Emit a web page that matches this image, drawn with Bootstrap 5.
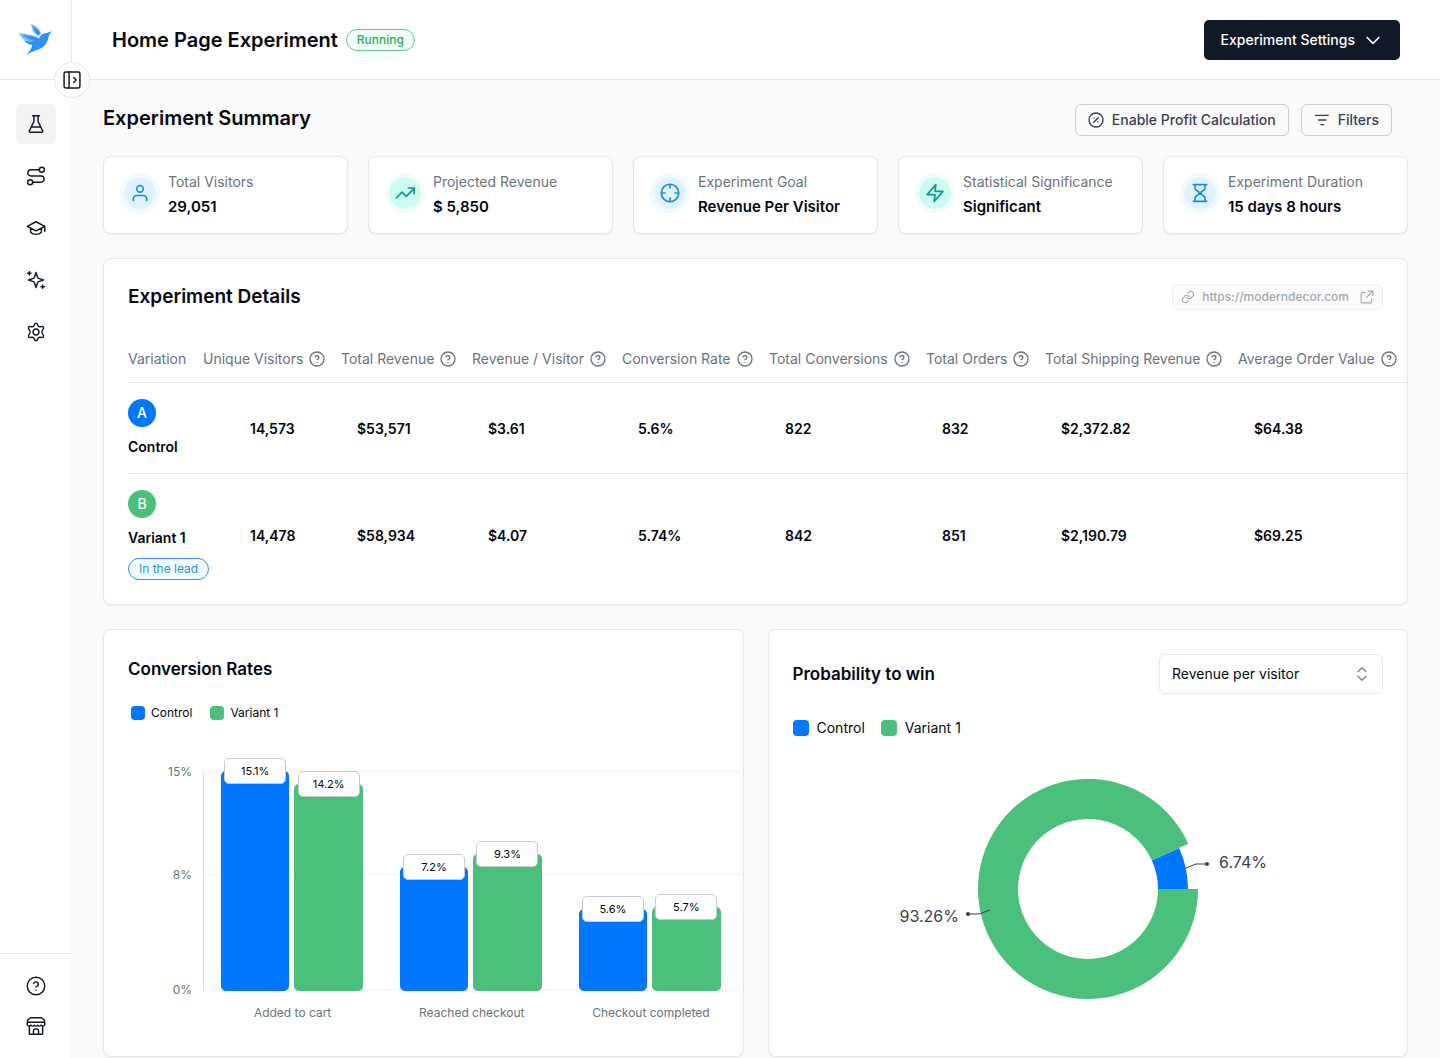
<!DOCTYPE html>
<html lang="en">
<head>
<meta charset="utf-8">
<meta name="viewport" content="width=device-width, initial-scale=1">
<title>Home Page Experiment</title>
<link href="https://cdn.jsdelivr.net/npm/bootstrap@5.3.0/dist/css/bootstrap.min.css" rel="stylesheet">
<style>
  :root {
    --ink: #030712; --ink-soft: #374151; --muted: #6b7280; --line: #e5e7eb;
    --control: #0077ff; --variant: #4bc07d; --rail: 71px;
  }
  body { font-family: Inter, "Liberation Sans", sans-serif; font-size: 14px; line-height: 20px; color: var(--ink); background: #fafafa; }
  svg { display: block; flex: none; }
  .icon { fill: none; stroke: currentColor; stroke-width: 2; stroke-linecap: round; stroke-linejoin: round; }
  .thin { stroke-width: 1.75; }

  .rail { width: var(--rail); height: 100vh; top: 0; z-index: 3; }
  .rail-brand { height: 80px; border-bottom: 1px solid var(--line); }
  .rail-nav { gap: 12px; }
  .rail-link { width: 40px; height: 40px; border-radius: 6px; color: #111827; }
  .rail-link.active { background: #f3f3f4; }
  .rail-foot { border-top: 1px solid var(--line); padding: 12px 0; }
  .rail-toggle { width: 36px; height: 36px; left: 54px; top: 62px; border: 1px solid var(--line); color: #111827; z-index: 4; }

  .content { min-width: 0; }
  .topbar { height: 80px; border-bottom: 1px solid var(--line); border-left: 1px solid var(--line); padding: 0 40px; }
  .topbar h1, .summary-title { font-size: 20px; line-height: 28px; font-weight: 600; }
  .pill { height: 22px; padding: 0 10px; border: 1px solid; font-size: 12px; line-height: 20px; font-weight: 500; }
  .pill-running { color: #2fae60; border-color: #5cc98a; background: #f0fdfa; }
  .pill-lead { color: #2f8fe6; border-color: #2f95f0; background: #f0fcff; font-weight: 400; }
  .btn-settings { height: 40px; padding: 0 16px; border-radius: 5px; background: #111827; color: #fff; font-size: 14px; font-weight: 500; }
  .btn-settings:hover { background: #1f2937; color: #fff; }

  .page { padding: 24px 32px 0; }
  .tools { gap: 12px; }
  .btn-tool { height: 32px; padding: 0 12px; border: 1px solid #cbccd0; border-radius: 6px; font-size: 14px; line-height: 20px; font-weight: 500; color: var(--ink-soft); background: #fafafa; }

  .panel { background: #fff; border: 1px solid var(--line); border-radius: 8px; box-shadow: 0 1px 2px rgba(0, 0, 0, .05); }
  .stats { gap: 20px; }
  .stat { flex: 1 1 0; height: 78px; padding: 1px 16px 0; gap: 8px; }
  .stat-icon { width: 40px; height: 40px; margin-bottom: 5px; border: 4px solid #f0fbff; background: #e0f2fe; color: #1791d6; background-clip: padding-box; }
  .stat-icon.teal { border-color: #f0fdfa; background-color: #ccfbf1; color: #12998a; }
  .stat-label { color: var(--muted); }
  .stat-value { font-size: 15px; line-height: 24px; font-weight: 600; margin-top: 3px; }

  .details-head { padding: 25px 24px 24px; height: 75px; }
  .details-title { font-size: 19px; line-height: 28px; font-weight: 600; }
  .url-chip { height: 26px; padding: 0 8px; gap: 7px; border: 1px solid #ececef; border-radius: 7px; background: #fcfcfd; color: #a3a6ad; font-size: 12px; font-weight: 500; }
  .details-wrap { padding: 0 0 8px 24px; }
  .details { table-layout: fixed; width: 100%; }
  .details tr { border-bottom: 1px solid var(--line); }
  .details tbody tr:last-child { border-bottom: 0; }
  .details thead th { height: 48px; padding: 2px 0 0; font-weight: 400; color: var(--muted); white-space: nowrap; }
  .head-cell { display: flex; align-items: center; gap: 6px; }
  .details td { padding: 2px 0 0 16px; font-weight: 600; }
  .details td:nth-child(2) { padding-left: 47px; }
  .details tbody th { padding: 16px 0; font-weight: 600; white-space: nowrap; }
  .variation { display: flex; flex-direction: column; align-items: flex-start; gap: 10px; }
  .avatar { width: 28px; height: 28px; color: #fff; font-weight: 500; }
  .fill-control { background: var(--control); }
  .fill-variant { background: var(--variant); }

  .charts { display: grid; grid-template-columns: 1fr 1fr; gap: 24px; }
  .chart-title { font-size: 17px; line-height: 30px; font-weight: 600; }
  .key { width: 14px; height: 14px; border-radius: 4px; }
  .key-lg { width: 16px; height: 16px; }
  .legend-sm { font-size: 12px; gap: 18px; margin: 19px 0 0 3px; }
  .legend-sm span { gap: 6px; }
  .plot { margin: 48px 2px 0 40px; }
  .y-axis { width: 24px; height: 220px; font-size: 12px; color: var(--muted); margin-right: 11px; }
  .y-axis span:nth-child(1) { margin-top: -9px; }
  .y-axis span:nth-child(2) { margin-bottom: 11px; }
  .y-axis span:nth-child(3) { margin-bottom: -9px; }
  .bars { height: 220px; border-left: 1px solid #dcdde0; background: linear-gradient(#f1f2f3, #f1f2f3) 0 0 / 100% 1px no-repeat, linear-gradient(#f1f2f3, #f1f2f3) 0 103px / 100% 1px no-repeat, linear-gradient(#f1f2f3, #f1f2f3) 0 219px / 100% 1px no-repeat; }
  .bar-group { flex: 1 1 0; gap: 5px; padding: 0 20px 0 17px; }
  .bar { flex: 1 1 0; border-radius: 5px; position: relative; }
  .bar-tag { position: absolute; top: -13px; left: 50%; width: 62px; margin-left: -31px; height: 26px; line-height: 24px; text-align: center; font-size: 11px; background: #fff; border: 1px solid #c9cacc; border-radius: 5px; }
  .x-axis { margin: 12px 0 0 35px; font-size: 12px; color: var(--muted); }
  .x-axis span { flex: 1 1 0; text-align: center; }

  .metric { width: 224px; }
  .metric select { appearance: none; width: 100%; height: 40px; padding: 0 36px 0 12px; border: 1px solid var(--line); border-radius: 6px; background: #fff; color: var(--ink); font-size: 14px; }
  .metric svg { position: absolute; right: 13px; top: 12px; color: #82858c; pointer-events: none; }
  .donut text { font-size: 16px; fill: var(--ink-soft); }
  .donut .lead-line { fill: none; stroke: var(--ink-soft); stroke-width: 1; }
</style>
</head>
<body>
<svg width="0" height="0" class="position-absolute" aria-hidden="true">
  <symbol id="help" viewBox="0 0 24 24"><circle cx="12" cy="12" r="10.5"/><path d="M9.1 9a3 3 0 0 1 5.8 1c0 2-3 3-3 3M12 17h.01"/></symbol>
</svg>
<div class="d-flex">
  <aside class="rail bg-white position-sticky d-flex flex-column flex-shrink-0">
    <a href="#" class="rail-brand d-flex align-items-center justify-content-center" aria-label="Home">
      <svg width="36" height="36" viewBox="0 0 36 36" aria-hidden="true">
        <path fill="#76baf8" d="M13 2c5 2 10 6 10 10l-3 2C15 11 14 7 13 2zM1 11c7 1 15 2 20 5l-5 6C9 20 3 16 1 11z"/>
        <path fill="#2d90fb" d="M15 4c4 3 7 5 7 8l-2 1c-3-3-4-5-5-9zM17 19C12 18 9 16 5 13c6 1 12 1 16 4 1-4 4-6 8-6l5-2-3 4c-1 8-5 13-12 15-4 1-7 3-11 5 4-4 6-7 6-10-4-1-7-2-8-5 3 2 7 2 11 1z"/>
      </svg>
    </a>
    <nav class="rail-nav d-flex flex-column align-items-center flex-grow-1 pt-4" aria-label="Main">
      <a href="#" class="rail-link active d-flex align-items-center justify-content-center" aria-label="Experiments"><svg class="icon thin" width="20" height="20" viewBox="0 0 24 24"><path d="M8 2h8M9.500 2v7L4 20.300A1.200 1.200 0 0 0 5.100 22h13.800a1.200 1.200 0 0 0 1.100-1.700L14.500 9V2M6.500 15.500h11"/></svg></a>
      <a href="#" class="rail-link d-flex align-items-center justify-content-center" aria-label="Journeys"><svg class="icon thin" width="20" height="20" viewBox="0 0 24 24"><circle cx="5" cy="19.500" r="3"/><circle cx="19" cy="4.500" r="3"/><path d="M16 4.500H6a3.750 3.750 0 0 0 0 7.500h12a3.750 3.750 0 0 1 0 7.500H8"/></svg></a>
      <a href="#" class="rail-link d-flex align-items-center justify-content-center" aria-label="Learn"><svg class="icon thin" width="20" height="20" viewBox="0 0 24 24"><path d="M12 4.500L1.500 10 12 15.500 22.500 10zM5.500 12.500V17c3 3.500 10 3.500 13 0v-4.500M22.500 10v6"/></svg></a>
      <a href="#" class="rail-link d-flex align-items-center justify-content-center" aria-label="Ideas"><svg class="icon thin" width="20" height="20" viewBox="0 0 24 24"><path d="M12 3l-1.900 5.800a2 2 0 0 1-1.300 1.300L3 12l5.800 1.900a2 2 0 0 1 1.300 1.300L12 21l1.900-5.800a2 2 0 0 1 1.300-1.300L21 12l-5.800-1.900a2 2 0 0 1-1.300-1.300zM4 2v4M2 4h4M20 18v4M18 20h4"/></svg></a>
      <a href="#" class="rail-link d-flex align-items-center justify-content-center" aria-label="Settings"><svg class="icon thin" width="20" height="20" viewBox="0 0 24 24"><circle cx="12" cy="12" r="3.500"/><path d="M9.500 4.500C10 2.500 10.800 1.500 12 1.500s2 1 2.500 3c.5 1 1.500 1.500 2.500 1.200 2-.7 3.400-.5 4 .6s0 2.400-1.300 3.700c-.8 1-.8 2.900 0 4 1.300 1.300 1.900 2.600 1.300 3.700s-2 1.300-4 .6c-1-.3-2 .2-2.500 1.200-.5 2-1.300 3-2.500 3s-2-1-2.500-3c-.5-1-1.500-1.500-2.500-1.200-2 .7-3.400.5-4-.6s0-2.400 1.300-3.700c.8-1 .8-3 0-4C3 8.700 2.400 7.400 3 6.300s2-1.300 4-.6c1 .3 2-.2 2.500-1.200z"/></svg></a>
    </nav>
    <div class="rail-foot d-flex flex-column align-items-center">
      <a href="#" class="rail-link d-flex align-items-center justify-content-center" aria-label="Help"><svg class="icon thin" width="20" height="20"><use href="#help"/></svg></a>
      <a href="#" class="rail-link d-flex align-items-center justify-content-center" aria-label="Store"><svg class="icon thin" width="20" height="20" viewBox="0 0 24 24"><path d="M6 2h12c2.500 1 4.500 3.500 4.500 6v2.500c-1 2-3.500 2-4.500.5-1 1.500-3 1.500-4 0-1 1.500-3 1.500-4 0-1 1.500-3 1.500-4 0-1 1.500-3.500 1.500-4.500-.5V8C1.500 5.500 3.500 3 6 2zM2 7.500h20M4 12.500V21a1 1 0 0 0 1 1h14a1 1 0 0 0 1-1v-8.500M9 22v-4.500a2 2 0 0 1 2-2h2a2 2 0 0 1 2 2V22"/></svg></a>
    </div>
    <button type="button" class="rail-toggle btn bg-white rounded-circle p-0 position-absolute d-flex align-items-center justify-content-center" aria-label="Expand sidebar"><svg class="icon thin" width="20" height="20" viewBox="0 0 24 24"><rect x="2.500" y="2.500" width="19" height="19" rx="2"/><path d="M8.500 2.500v19M14 9l3 3-3 3"/></svg></button>
  </aside>

  <div class="content flex-grow-1">
    <header class="topbar bg-white d-flex align-items-center justify-content-between">
      <div class="d-flex align-items-center gap-2">
        <h1 class="mb-0">Home Page Experiment</h1>
        <span class="pill pill-running rounded-pill">Running</span>
      </div>
      <button type="button" class="btn btn-settings d-flex align-items-center gap-2">Experiment Settings
        <svg class="icon" width="20" height="20" viewBox="0 0 24 24"><path d="M5 9l7 7 7-7"/></svg></button>
    </header>

    <main class="page">
      <div class="d-flex align-items-start justify-content-between mb-3 pb-1">
        <h2 class="summary-title mb-0">Experiment Summary</h2>
        <div class="tools d-flex me-3">
          <button type="button" class="btn btn-tool d-flex align-items-center gap-2"><svg class="icon" width="16" height="16" viewBox="0 0 24 24"><circle cx="12" cy="12" r="10.500"/><path d="M15.500 8.500l-7 7M9 9h.01M15 15h.01"/></svg>Enable Profit Calculation</button>
          <button type="button" class="btn btn-tool d-flex align-items-center gap-2"><svg class="icon" width="16" height="16" viewBox="0 0 24 24"><path d="M2.500 5h19M7 12h11M10.500 19h4"/></svg>Filters</button>
        </div>
      </div>

      <section class="stats d-flex" aria-label="Summary">
        <div class="panel stat d-flex align-items-center">
          <div class="stat-icon rounded-circle d-flex align-items-center justify-content-center"><svg class="icon" width="20" height="20" viewBox="0 0 24 24"><circle cx="12" cy="7" r="4"/><path d="M20 21v-2a4 4 0 0 0-4-4H8a4 4 0 0 0-4 4v2"/></svg></div>
          <div><div class="stat-label">Total Visitors</div><div class="stat-value">29,051</div></div>
        </div>
        <div class="panel stat d-flex align-items-center">
          <div class="stat-icon teal rounded-circle d-flex align-items-center justify-content-center"><svg class="icon" width="20" height="20" viewBox="0 0 24 24"><path d="M1.500 18l7-7 5 5L22.500 7M16 6h7v7"/></svg></div>
          <div><div class="stat-label">Projected Revenue</div><div class="stat-value">$ 5,850</div></div>
        </div>
        <div class="panel stat d-flex align-items-center">
          <div class="stat-icon rounded-circle d-flex align-items-center justify-content-center"><svg class="icon" width="20" height="20" viewBox="0 0 24 24"><circle cx="12" cy="12" r="10.500"/><path d="M22 12h-4M6 12H2M12 6V2M12 22v-4"/></svg></div>
          <div><div class="stat-label">Experiment Goal</div><div class="stat-value">Revenue Per Visitor</div></div>
        </div>
        <div class="panel stat d-flex align-items-center">
          <div class="stat-icon teal rounded-circle d-flex align-items-center justify-content-center"><svg class="icon" width="20" height="20" viewBox="0 0 24 24"><path d="M13 2L2.500 14H12l-1 8L21.500 10H12z"/></svg></div>
          <div><div class="stat-label">Statistical Significance</div><div class="stat-value">Significant</div></div>
        </div>
        <div class="panel stat d-flex align-items-center">
          <div class="stat-icon rounded-circle d-flex align-items-center justify-content-center"><svg class="icon" width="20" height="20" viewBox="0 0 24 24"><path d="M4 22h16M4 2h16M18 22v-4.200a2 2 0 0 0-.6-1.400L12 12l-5.400 4.400a2 2 0 0 0-.6 1.400V22M6 2v4.200a2 2 0 0 0 .6 1.400L12 12l5.400-4.400a2 2 0 0 0 .6-1.400V2"/></svg></div>
          <div><div class="stat-label">Experiment Duration</div><div class="stat-value">15 days 8 hours</div></div>
        </div>
      </section>

      <section class="panel mt-4 overflow-hidden">
        <div class="details-head d-flex align-items-center justify-content-between">
          <h2 class="details-title mb-0">Experiment Details</h2>
          <a href="#" class="url-chip d-flex align-items-center text-decoration-none">
            <svg class="icon" width="14" height="14" viewBox="0 0 24 24"><path d="M10 13a5 5 0 0 0 7.500.5l3-3a5 5 0 0 0-7-7l-1.800 1.700M14 11a5 5 0 0 0-7.500-.5l-3 3a5 5 0 0 0 7 7l1.700-1.700"/></svg>
            <span class="me-1">https://moderndecor.com</span>
            <svg class="icon" width="14" height="14" viewBox="0 0 24 24"><path d="M14 2h8v8M22 2L11 13M9 4H4a2 2 0 0 0-2 2v14a2 2 0 0 0 2 2h14a2 2 0 0 0 2-2v-5"/></svg>
          </a>
        </div>
        <div class="details-wrap">
          <table class="details">
            <colgroup><col style="width:75px"><col style="width:138px"><col style="width:131px"><col style="width:150px"><col style="width:147px"><col style="width:157px"><col style="width:119px"><col style="width:193px"><col style="width:169px"></colgroup>
            <thead><tr>
              <th scope="col">Variation</th>
              <th scope="col"><span class="head-cell">Unique Visitors<svg class="icon" width="16" height="16"><use href="#help"/></svg></span></th>
              <th scope="col"><span class="head-cell">Total Revenue<svg class="icon" width="16" height="16"><use href="#help"/></svg></span></th>
              <th scope="col"><span class="head-cell">Revenue / Visitor<svg class="icon" width="16" height="16"><use href="#help"/></svg></span></th>
              <th scope="col"><span class="head-cell">Conversion Rate<svg class="icon" width="16" height="16"><use href="#help"/></svg></span></th>
              <th scope="col"><span class="head-cell">Total Conversions<svg class="icon" width="16" height="16"><use href="#help"/></svg></span></th>
              <th scope="col"><span class="head-cell">Total Orders<svg class="icon" width="16" height="16"><use href="#help"/></svg></span></th>
              <th scope="col"><span class="head-cell">Total Shipping Revenue<svg class="icon" width="16" height="16"><use href="#help"/></svg></span></th>
              <th scope="col"><span class="head-cell">Average Order Value<svg class="icon" width="16" height="16"><use href="#help"/></svg></span></th>
            </tr></thead>
            <tbody>
              <tr><th scope="row"><div class="variation"><span class="avatar fill-control rounded-circle d-flex align-items-center justify-content-center">A</span><span>Control</span></div></th>
                <td>14,573</td><td>$53,571</td><td>$3.61</td><td>5.6%</td><td>822</td><td>832</td><td>$2,372.82</td><td>$64.38</td></tr>
              <tr><th scope="row"><div class="variation"><span class="avatar fill-variant rounded-circle d-flex align-items-center justify-content-center">B</span><span>Variant 1</span><span class="pill pill-lead rounded-pill">In the lead</span></div></th>
                <td>14,478</td><td>$58,934</td><td>$4.07</td><td>5.74%</td><td>842</td><td>851</td><td>$2,190.79</td><td>$69.25</td></tr>
            </tbody>
          </table>
        </div>
      </section>

      <div class="charts mt-4">
        <section class="panel py-4 ps-4">
          <h2 class="chart-title mb-0">Conversion Rates</h2>
          <div class="legend-sm d-flex">
            <span class="d-flex align-items-center"><i class="key fill-control"></i>Control</span>
            <span class="d-flex align-items-center"><i class="key fill-variant"></i>Variant 1</span>
          </div>
          <div class="plot">
            <div class="d-flex">
              <div class="y-axis d-flex flex-column justify-content-between text-end"><span>15%</span><span>8%</span><span>0%</span></div>
              <div class="bars d-flex flex-grow-1">
                <div class="bar-group d-flex align-items-end"><div class="bar fill-control" style="height:100%"><span class="bar-tag">15.1%</span></div><div class="bar fill-variant" style="height:94%"><span class="bar-tag">14.2%</span></div></div>
                <div class="bar-group d-flex align-items-end"><div class="bar fill-control" style="height:56%"><span class="bar-tag">7.2%</span></div><div class="bar fill-variant" style="height:62%"><span class="bar-tag">9.3%</span></div></div>
                <div class="bar-group d-flex align-items-end"><div class="bar fill-control" style="height:37%"><span class="bar-tag">5.6%</span></div><div class="bar fill-variant" style="height:38%"><span class="bar-tag">5.7%</span></div></div>
              </div>
            </div>
            <div class="x-axis d-flex"><span>Added to cart</span><span>Reached checkout</span><span>Checkout completed</span></div>
          </div>
        </section>

        <section class="panel p-4">
          <div class="d-flex align-items-center justify-content-between">
            <h2 class="chart-title mb-0"><label for="metric">Probability to win</label></h2>
            <div class="metric position-relative">
              <select id="metric"><option>Revenue per visitor</option></select>
              <svg class="icon" width="16" height="16" viewBox="0 0 24 24"><path d="M6 8.500l6-6 6 6M6 15.500l6 6 6-6"/></svg>
            </div>
          </div>
          <div class="d-flex gap-3 mt-4">
            <span class="d-flex align-items-center gap-2"><i class="key key-lg fill-control"></i>Control</span>
            <span class="d-flex align-items-center gap-2"><i class="key key-lg fill-variant"></i>Variant 1</span>
          </div>
          <svg class="donut mx-auto mt-4" width="400" height="270" viewBox="0 0 400 270" role="img" aria-label="Probability to win by variation">
            <path fill="#0077ff" d="M300 127A100 100 0 0 0 291.200 85.900L263.800 98.200A70 70 0 0 1 270 127z"/>
            <path fill="#4bc07d" d="M300.300 81.800A110 110 0 1 0 310 127H270A70 70 0 1 1 263.800 98.200z"/>
            <path class="lead-line" d="M298 106l10-4h12M80 152h11l11-4"/>
            <circle cx="319" cy="102" r="2" fill="#374151"/><circle cx="80" cy="152" r="2" fill="#374151"/>
            <text x="331" y="106">6.74%</text>
            <text x="71" y="160" text-anchor="end">93.26%</text>
          </svg>
        </section>
      </div>
    </main>
  </div>
</div>
<script src="https://cdn.jsdelivr.net/npm/bootstrap@5.3.0/dist/js/bootstrap.bundle.min.js"></script>
</body>
</html>
